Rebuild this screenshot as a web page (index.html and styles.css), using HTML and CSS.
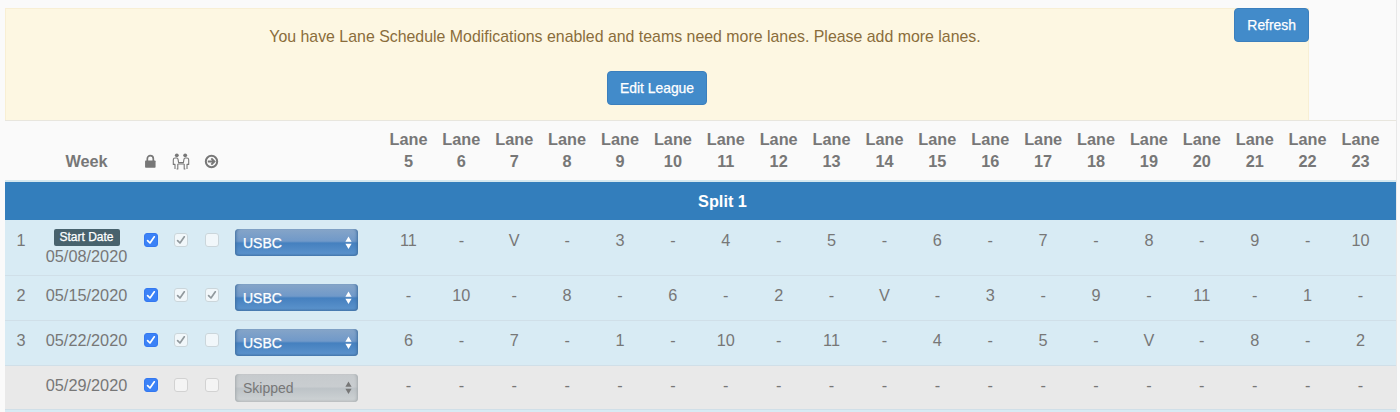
FILE: index.html
```
<!DOCTYPE html>
<html lang="en">
<head>
    <meta charset="UTF-8">
    <meta name="viewport" content="width=device-width, initial-scale=1.0">
    <title>Lane Schedule</title>
    <link rel="stylesheet" href="styles.css">
</head>
<body>

    <!-- Shared icons -->
    <svg class="sprite">
        <symbol id="check" viewBox="0 0 14 14">
            <path d="M3.6 7.6 L6 10 L10.3 3.8" fill="none" stroke="currentColor" stroke-width="1.7" stroke-linecap="round" stroke-linejoin="round"/>
        </symbol>
        <symbol id="arrows" viewBox="0 0 7 14">
            <path d="M3.5 0.5 L6.6 5.7 H0.4 Z M3.5 13 L0.4 7.8 H6.6 Z" fill="currentColor"/>
        </symbol>
    </svg>

    <div class="schedule">
        <!-- Warning -->
        <div class="alert">
            <button class="btn refresh">Refresh</button>
            <p>You have Lane Schedule Modifications enabled and teams need more lanes. Please add more lanes.</p>
            <button class="btn">Edit League</button>
        </div>

        <table class="lanes">
            <colgroup>
                <col class="col-num"><col class="col-week"><col class="col-lock"><col class="col-check"><col class="col-check"><col class="col-type">
                <col class="col-lane" span="18"><col class="col-last">
            </colgroup>
            <thead>
                <tr>
                    <th></th>
                    <th>Week</th>
                    <th>
                        <svg class="icon" viewBox="0 0 16 16"><path d="M4.6 7.4 V5 a3.2 3.2 0 0 1 6.4 0 V7.4" fill="none" stroke="currentColor" stroke-width="1.8"/><rect x="2.2" y="7" width="11.2" height="7.6" rx="0.8" fill="currentColor"/></svg>
                    </th>
                    <th>
                        <svg class="icon icon-people" viewBox="0 0 18 17"><g fill="none" stroke="currentColor" stroke-width="1.1" stroke-linejoin="round"><path d="M3 16 V11.4 H1.3 V6.8 Q1.3 5 3.1 5 H4.6 Q6 5 6.1 6.6 L6.6 9.6 H11.4 L11.9 6.6 Q12 5 13.4 5 H14.9 Q16.7 5 16.7 6.8 V11.4 H15 V16"/><path d="M5.8 11 V16 H4.6 M12.2 11 V16 H13.4 M5.8 11 H12.2"/></g><circle cx="4.8" cy="2.3" r="1.9" fill="currentColor"/><circle cx="13.2" cy="2.3" r="1.9" fill="currentColor"/></svg>
                    </th>
                    <th>
                        <svg class="icon" viewBox="0 0 15 15"><circle cx="7.5" cy="7.5" r="5.7" fill="none" stroke="currentColor" stroke-width="2"/><path d="M3.8 7.5 H9.8 M7.3 4.4 L10.4 7.5 L7.3 10.6" fill="none" stroke="currentColor" stroke-width="2"/></svg>
                    </th>
                    <th></th>
                    <th>Lane 5</th><th>Lane 6</th><th>Lane 7</th><th>Lane 8</th><th>Lane 9</th><th>Lane 10</th><th>Lane 11</th><th>Lane 12</th><th>Lane 13</th><th>Lane 14</th>
                    <th>Lane 15</th><th>Lane 16</th><th>Lane 17</th><th>Lane 18</th><th>Lane 19</th><th>Lane 20</th><th>Lane 21</th><th>Lane 22</th><th>Lane 23</th>
                </tr>
            </thead>
            <tbody>
                <tr class="split"><td colspan="25">Split 1</td></tr>
                <tr class="week first">
                    <td>1</td>
                    <td><span class="label">Start Date</span>05/08/2020</td>
                    <td><span class="box on"><svg><use href="#check"/></svg></span></td>
                    <td><span class="box"><svg><use href="#check"/></svg></span></td>
                    <td><span class="box"></span></td>
                    <td><span class="select">USBC<svg><use href="#arrows"/></svg></span></td>
                    <td>11</td><td>-</td><td>V</td><td>-</td><td>3</td><td>-</td><td>4</td><td>-</td><td>5</td><td>-</td>
                    <td>6</td><td>-</td><td>7</td><td>-</td><td>8</td><td>-</td><td>9</td><td>-</td><td>10</td>
                </tr>
                <tr class="week">
                    <td>2</td>
                    <td>05/15/2020</td>
                    <td><span class="box on"><svg><use href="#check"/></svg></span></td>
                    <td><span class="box"><svg><use href="#check"/></svg></span></td>
                    <td><span class="box"><svg><use href="#check"/></svg></span></td>
                    <td><span class="select">USBC<svg><use href="#arrows"/></svg></span></td>
                    <td>-</td><td>10</td><td>-</td><td>8</td><td>-</td><td>6</td><td>-</td><td>2</td><td>-</td><td>V</td>
                    <td>-</td><td>3</td><td>-</td><td>9</td><td>-</td><td>11</td><td>-</td><td>1</td><td>-</td>
                </tr>
                <tr class="week">
                    <td>3</td>
                    <td>05/22/2020</td>
                    <td><span class="box on"><svg><use href="#check"/></svg></span></td>
                    <td><span class="box"><svg><use href="#check"/></svg></span></td>
                    <td><span class="box"></span></td>
                    <td><span class="select">USBC<svg><use href="#arrows"/></svg></span></td>
                    <td>6</td><td>-</td><td>7</td><td>-</td><td>1</td><td>-</td><td>10</td><td>-</td><td>11</td><td>-</td>
                    <td>4</td><td>-</td><td>5</td><td>-</td><td>V</td><td>-</td><td>8</td><td>-</td><td>2</td>
                </tr>
                <tr class="week skipped">
                    <td></td>
                    <td>05/29/2020</td>
                    <td><span class="box on"><svg><use href="#check"/></svg></span></td>
                    <td><span class="box"></span></td>
                    <td><span class="box"></span></td>
                    <td><span class="select">Skipped<svg><use href="#arrows"/></svg></span></td>
                    <td>-</td><td>-</td><td>-</td><td>-</td><td>-</td><td>-</td><td>-</td><td>-</td><td>-</td><td>-</td>
                    <td>-</td><td>-</td><td>-</td><td>-</td><td>-</td><td>-</td><td>-</td><td>-</td><td>-</td>
                </tr>
                <tr class="next"><td colspan="25"></td></tr>
            </tbody>
        </table>
    </div>

</body>
</html>
```
FILE: styles.css
```
body {
    font-family: "Liberation Sans", Arial, sans-serif;
    font-size: 16.3px;
    line-height: 20px;
    margin: 0;
    background-color: #fafafa;
    color: #777;
}
.sprite {
    display: none;
}
.schedule {
    width: 1392px;
    height: 412px;
    margin-left: 5px;
    padding-top: 8px;
    box-sizing: border-box;
    border-right: 1px solid #e8e8e8;
}

/* Warning */
.alert {
    position: relative;
    width: 1304px;
    height: 112px;
    box-sizing: border-box;
    border: 1px solid #f8efd4;
    border-bottom: none;
    background: #fdf7e2;
    color: #8a6d3b;
    text-align: center;
}
.alert p {
    margin: 0;
    padding: 18px 64px 0 0;
    height: 44px;
    font-size: 15.9px;
}
.btn {
    height: 34px;
    padding: 0 12px;
    border: 1px solid #3b7fbd;
    border-radius: 4px;
    background: #428bca;
    color: #fff;
    font-family: inherit;
    font-size: 13.9px;
    -webkit-text-stroke: 0.25px #fff;
}
.refresh {
    position: absolute;
    top: -1px;
    right: -1px;
}

/* Schedule table */
.lanes {
    width: 1391px;
    table-layout: fixed;
    border-spacing: 0;
    border-top: 1px solid #e8e6de;
    text-align: center;
}
.col-num { width: 32px; }
.col-week { width: 99px; }
.col-lock { width: 29px; }
.col-check { width: 31px; }
.col-type { width: 155px; }
.col-lane { width: 52.9px; }
th, td {
    padding: 0;
}
.week td:last-child {
    padding-right: 9px;
}
th {
    height: 61px;
    box-sizing: border-box;
    padding: 8px 3px 8px;
    vertical-align: bottom;
    line-height: 21.5px;
    border-bottom: 2px solid #d5e8ef;
}
th:last-child {
    padding-right: 12px;
}
.icon {
    display: block;
    width: 15px;
    height: 15px;
    margin: 0 auto 3px;
}
.icon-people {
    width: 18px;
    height: 17px;
    margin: 0 0 2px 4px;
}
.split td {
    height: 38px;
    padding-left: 44px;
    background: #337ebc;
    color: #fff;
    font-weight: bold;
}
.week td {
    height: 45px;
    box-sizing: border-box;
    padding-top: 9px;
    vertical-align: top;
    background: #d8ebf4;
    border-top: 1px solid #d0dfe8;
}
.week.first td {
    height: 55px;
    border-top-color: #d8ebf4;
}
.week.skipped td {
    height: 44px;
    background: #e9e9e9;
}
.next td {
    height: 3px;
    background: #d8ebf4;
    border-top: 1px solid #d0dfe8;
}
.label {
    display: block;
    width: 66px;
    height: 17px;
    margin: -1px auto 0;
    border-radius: 2px;
    background: #48626d;
    color: #fff;
    font-size: 12px;
    line-height: 16px;
    -webkit-text-stroke: 0.25px #fff;
}
.box {
    display: block;
    width: 14px;
    height: 14px;
    margin: 3px auto 0;
    box-sizing: border-box;
    border: 1px solid #cbd6db;
    border-radius: 3px;
    background: #f1f7fa;
    color: #91999d;
}
.box svg {
    display: block;
    width: 14px;
    height: 14px;
    margin: -1px;
}
.box.on {
    border-color: #3478f0;
    background: #3b82f7;
    color: #fff;
}
.skipped .box:not(.on) {
    background: #f4f4f4;
    border-color: #d2d2d2;
}
.select {
    display: flex;
    justify-content: space-between;
    align-items: center;
    width: 123px;
    height: 27px;
    margin: -1px 0 0 8px;
    padding: 0 6px 0 8px;
    box-sizing: border-box;
    border-radius: 4px;
    background: linear-gradient(#86a5c8, #7099c9 45%, #4580bf 52%, #5890ca 90%, #4678ad);
    box-shadow: inset 3px 0 3px -2px #3f6e9f, inset -3px 0 3px -2px #3f6e9f;
    color: #fff;
    font-size: 14px;
    -webkit-text-stroke: 0.25px currentColor;
}
.select svg {
    width: 7px;
    height: 14px;
}
.skipped .select {
    height: 28px;
    background: linear-gradient(#c6cacd, #c9cdd0 45%, #bdc3c7 52%, #cbd0d2 90%, #bcbfc1);
    box-shadow: inset 3px 0 3px -2px #a5abae, inset -3px 0 3px -2px #a5abae;
    color: #777;
    -webkit-text-stroke: 0;
}
```
